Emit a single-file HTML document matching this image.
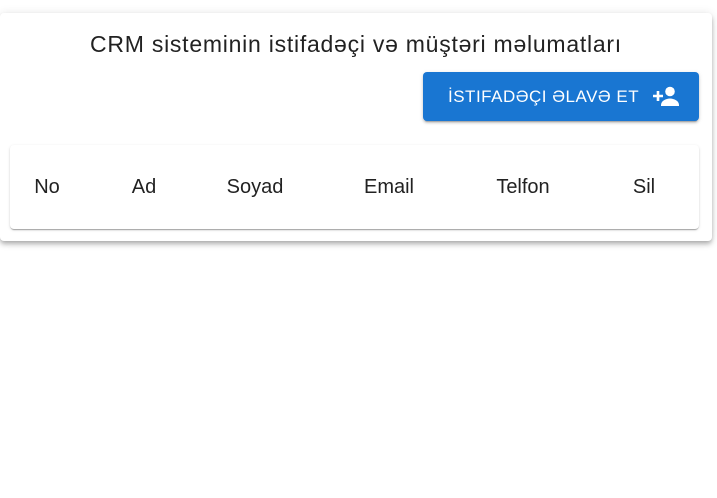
<!DOCTYPE html>
<html><head><style>
body{margin:0;width:717px;height:498px;background:#fff;font-family:"Liberation Sans",sans-serif;color:#222;position:relative;overflow:hidden}
.outer{position:absolute;left:0;top:13px;width:712px;height:228px;background:#fff;border-radius:4px;box-shadow:0 2px 4px -1px rgba(0,0,0,.2),0 4px 5px rgba(0,0,0,.14),0 1px 10px rgba(0,0,0,.12)}
.title{position:absolute;left:0;width:712px;top:30px;text-align:center;font-size:23px;letter-spacing:.75px;line-height:28px}
.btn{position:absolute;left:423px;top:72px;width:276px;height:49px;background:#1976d2;border-radius:4px;box-shadow:0 3px 1px -2px rgba(0,0,0,.2),0 2px 2px rgba(0,0,0,.14),0 1px 5px rgba(0,0,0,.12);color:#fff;font-size:17px}
.btn span{position:absolute;left:25px;top:15px;letter-spacing:.5px}
.inner{position:absolute;left:10px;top:145px;width:689px;height:84px;background:#fff;border-radius:4px;box-shadow:0 2px 1px -1px rgba(0,0,0,.2),0 1px 1px rgba(0,0,0,.14),0 1px 3px rgba(0,0,0,.12)}
.h{position:absolute;top:176px;font-size:20px;transform:translateX(-50%)}
</style></head><body>
<div class="outer"></div>
<div class="title">CRM sisteminin istifadəçi və müştəri məlumatları</div>
<div class="btn"><span>İSTIFADƏÇI ƏLAVƏ ET</span>
<svg style="position:absolute;left:228px;top:12px" width="30" height="24" viewBox="0 0 30 24"><path d="M2 12h10M7 7v10" stroke="#fff" stroke-width="2.6"/><circle cx="19" cy="7.5" r="4.8" fill="#fff"/><path d="M10 21c0-4 5-6.5 9-6.5s9 2.5 9 6.5v1H10z" fill="#fff"/></svg></div>
<div class="inner"></div>
<div class="h" style="left:47px">No</div>
<div class="h" style="left:144px">Ad</div>
<div class="h" style="left:255px">Soyad</div>
<div class="h" style="left:389px">Email</div>
<div class="h" style="left:523px">Telfon</div>
<div class="h" style="left:644px">Sil</div>
</body></html>
